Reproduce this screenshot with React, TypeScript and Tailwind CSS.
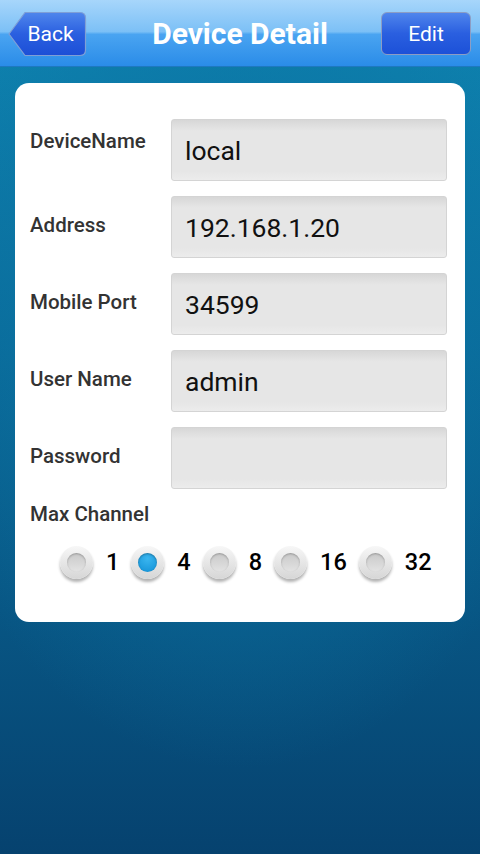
import { useState } from 'react';

const fields = [
  { label: 'DeviceName', value: 'local', lift: true },
  { label: 'Address', value: '192.168.1.20' },
  { label: 'Mobile Port', value: '34599' },
  { label: 'User Name', value: 'admin' },
  { label: 'Password', value: '' },
];

const channels = [1, 4, 8, 16, 32];

function BackButton() {
  return (
    <button className="relative mt-[1px] h-[46px] w-[79px]">
      <svg width="79" height="46" viewBox="0 0 79 46" className="absolute inset-0">
        <defs>
          <linearGradient id="bk" x1="0" y1="0" x2="0" y2="1">
            <stop offset="0" stopColor="#4f86ec" />
            <stop offset="0.5" stopColor="#2a5fe0" />
            <stop offset="1" stopColor="#1c4fd6" />
          </linearGradient>
        </defs>
        <path
          d="M1 23 L17 1.5 H72 Q77.5 1.5 77.5 7 V39 Q77.5 44.5 72 44.5 H17 Z"
          fill="url(#bk)"
          stroke="#7f9fd6"
          strokeWidth="1.2"
        />
      </svg>
      <span className="absolute inset-0 flex items-center justify-center pl-[6px] pt-[2px] text-[21px] text-white">Back</span>
    </button>
  );
}

function Radio({ on }: { on: boolean }) {
  return (
    <span className="flex h-[33px] w-[33px] items-center justify-center rounded-full bg-[linear-gradient(#f7f7f7,#d6d6d6)] shadow-[0_3px_3px_rgba(0,0,0,0.3)]">
      <span
        className={
          on
            ? 'h-[19px] w-[19px] rounded-full bg-[radial-gradient(circle_at_50%_30%,#3ab6ef,#1190d6)] shadow-[inset_0_1px_2px_rgba(0,0,0,0.3)]'
            : 'h-[19px] w-[19px] rounded-full bg-[linear-gradient(#c9c9c9,#e3e3e3)] shadow-[inset_0_1px_2px_rgba(0,0,0,0.25)]'
        }
      />
    </span>
  );
}

export default function App() {
  const [channel, setChannel] = useState(4);

  return (
    <div className="flex h-[854px] w-[480px] flex-col overflow-hidden font-['Roboto',sans-serif] bg-[radial-gradient(ellipse_70%_55%_at_50%_35%,#0b74a4,transparent),linear-gradient(#0f86b2,#0a6c9b_40%,#06426f)]">
      <header className="relative flex h-[67px] shrink-0 items-center justify-between border-b border-[#1e78c0] bg-[linear-gradient(#a7d6fb,#7cc0f6_48%,#4aa4f1_52%,#2a8ce8)] px-[8px]">
        <BackButton />
        <h1 className="absolute left-1/2 top-[14px] -translate-x-1/2 text-[30px] leading-[40px] font-bold text-white">Device Detail</h1>
        <button className="mr-[1px] mt-[1px] h-[43px] w-[90px] rounded-[6px] border border-[#8c9dc4] bg-[linear-gradient(#4f85ec,#2a5fe0_50%,#1c51d8)] pt-[2px] text-[21px] text-white">
          Edit
        </button>
      </header>

      <main className="px-[15px] pt-[16px]">
        <div className="rounded-[14px] bg-white pb-[42px] pl-[15px] pr-[18px] pt-[36px]">
          <div className="flex flex-col gap-[15px]">
            {fields.map((f) => (
              <div key={f.label} className="flex items-center">
                <span
                  className={
                    f.lift
                      ? 'w-[141px] -mt-[17px] text-[20.5px] font-medium text-[#333]'
                      : 'w-[141px] -mt-[4px] text-[20.5px] font-medium text-[#333]'
                  }
                >
                  {f.label}
                </span>
                <div className="flex h-[62px] flex-1 items-center rounded-[3px] border border-[#d4d4d4] bg-[linear-gradient(#d7d7d7,#e6e6e6_18%,#e6e6e6_85%,#ececec)] px-[13px] pt-[2px] text-[26.5px] text-[#111]">
                  {f.value}
                </div>
              </div>
            ))}
          </div>

          <p className="mt-[10px] text-[20.5px] font-medium text-[#333]">Max Channel</p>

          <div className="mt-[15px] flex items-center pl-[30px]">
            {channels.map((c) => (
              <button key={c} onClick={() => setChannel(c)} className="mr-[12px] flex items-center gap-[13px]">
                <Radio on={channel === c} />
                <span className="text-[23.5px] font-medium text-black">{c}</span>
              </button>
            ))}
          </div>
        </div>
      </main>
    </div>
  );
}
